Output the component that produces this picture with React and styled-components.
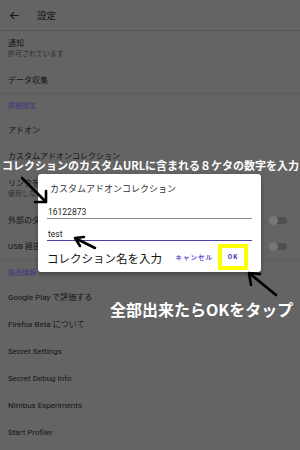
import React from 'react'
import styled, { createGlobalStyle } from 'styled-components';

const Global = createGlobalStyle`
  body {
    margin: 0;
    background: #646464;
    font-family: Roboto, "Noto Sans CJK JP", sans-serif;
  }
`

const Screen = styled.div`
  position: relative;
  width: 300px;
  height: 450px;
  overflow: hidden;
  background: #646464;
`

const AppBar = styled.div`
  height: 30px;
  display: flex;
  align-items: center;
  padding-left: 9px;
  box-shadow: 0 1px 1px rgba(0, 0, 0, 0.12);
  svg {
    width: 11px;
    height: 11px;
  }
`

const BarTitle = styled.div`
  margin-left: 17px;
  font-size: 9.5px;
  color: #161616;
`

const Row = styled.div`
  height: ${p => p.h}px;
  display: flex;
  align-items: center;
  padding: 0 13px 0 8px;
  box-sizing: border-box;
`

const Texts = styled.div`
  display: flex;
  flex-direction: column;
  flex: 1;
  white-space: nowrap;
`

const Label = styled.div`
  font-size: 8px;
  line-height: 11px;
  color: #141414;
`

const Sub = styled.div`
  font-size: 7px;
  line-height: 10px;
  color: #303030;
`

const Divider = styled.div`
  height: 1px;
  background: #5b5b5b;
`

const Category = styled.div`
  height: 23px;
  padding: 7px 0 0 8px;
  box-sizing: border-box;
  font-size: 7px;
  line-height: 10px;
  color: #41337f;
`

const Toggle = styled.div`
  position: relative;
  width: 17px;
  height: 7px;
  border-radius: 4px;
  background: #505050;
  &::after {
    content: '';
    position: absolute;
    left: -1px;
    top: -1px;
    width: 9px;
    height: 9px;
    border-radius: 50%;
    background: #777777;
  }
`

const Dialog = styled.div`
  position: absolute;
  left: 38px;
  top: 174px;
  width: 223px;
  height: 98px;
  box-sizing: border-box;
  padding: 9px 9px 0 9px;
  background: #ffffff;
  border-radius: 3px;
  box-shadow: 0 2px 4px rgba(0, 0, 0, 0.35);
`

const DialogTitle = styled.div`
  font-size: 9px;
  line-height: 12px;
  color: #333333;
  padding-left: 3px;
`

const Field = styled.div`
  margin-top: ${p => p.mt}px;
  font-size: 8.5px;
  line-height: 12px;
  color: #1f1f1f;
  padding-left: 1px;
  border-bottom: ${p => p.active ? '1.5px solid #4c3fa6' : '1px solid #8a8a8a'};
`

const Actions = styled.div`
  display: flex;
  justify-content: flex-end;
  align-items: center;
  margin-top: 3px;
  padding-right: 4px;
`

const TextButton = styled.div`
  font-size: 6.5px;
  font-weight: bold;
  letter-spacing: 1px;
  color: ${p => p.strong ? '#4a33b5' : '#6a55d0'};
`

const Highlight = styled.div`
  width: 30px;
  height: 26px;
  box-sizing: border-box;
  border: 4px solid #ffff00;
  display: flex;
  align-items: center;
  justify-content: center;
  margin-left: 5px;
`

const Note = styled.div`
  position: absolute;
  left: ${p => p.x}px;
  top: ${p => p.y}px;
  font-family: "Noto Sans CJK JP", sans-serif;
  font-size: ${p => p.size}px;
  line-height: ${p => p.size + 4}px;
  font-weight: ${p => p.bold ? 'bold' : 'normal'};
  color: ${p => p.color};
  white-space: nowrap;
`

const Arrows = styled.svg`
  position: absolute;
  left: 0;
  top: 0;
  width: 300px;
  height: 450px;
  pointer-events: none;
`

const items = [
  { h: 26, label: 'データ収集' },
]

const advanced = [
  { h: 26, label: 'アドオン' },
  { h: 26, label: 'カスタムアドオンコレクション' },
  { h: 38, label: 'リンクをアプリで開く', sub: '使用しない' },
  { h: 26, label: '外部のダウンロードマネージャー', toggle: true },
  { h: 27, label: 'USB 経由のリモートデバッグ', toggle: true },
]

const about = [
  'Google Play で評価する',
  'Firefox Beta について',
  'Secret Settings',
  'Secret Debug Info',
  'Nimbus Experiments',
  'Start Profiler',
]

const Item = ({ h, label, sub, toggle }) => (
  <Row h={h}>
    <Texts>
      <Label>{label}</Label>
      {sub && <Sub>{sub}</Sub>}
    </Texts>
    {toggle && <Toggle />}
  </Row>
)

const App = () => {
  return (
    <Screen>
      <Global />
      <AppBar>
        <svg viewBox="0 0 24 24" fill="none" stroke="#161616" strokeWidth="2.4">
          <path d="M21 12H4M11 4.5 3.5 12l7.5 7.5" />
        </svg>
        <BarTitle>設定</BarTitle>
      </AppBar>
      <Item h={37} label="通知" sub="許可されています" />
      {items.map((it, i) => <Item key={i} {...it} />)}
      <Divider />
      <Category>詳細設定</Category>
      {advanced.map((it, i) => <Item key={i} {...it} />)}
      <Divider />
      <Category>製品情報</Category>
      {about.map((label, i) => <Item key={i} h={27} label={label} />)}

      <Dialog>
        <DialogTitle>カスタムアドオンコレクション</DialogTitle>
        <Field mt={11}>16122873</Field>
        <Field mt={9} active>test</Field>
        <Actions>
          <TextButton>キャンセル</TextButton>
          <Highlight>
            <TextButton strong>OK</TextButton>
          </Highlight>
        </Actions>
      </Dialog>

      <Note x={2} y={158} size={11} bold color="#ffffff">
        コレクションのカスタムURLに含まれる８ケタの数字を入力
      </Note>
      <Note x={47} y={251} size={11.5} color="#111111">コレクション名を入力</Note>
      <Note x={110} y={299} size={16} bold color="#ffffff">全部出来たらOKをタップ</Note>

      <Arrows viewBox="0 0 300 450" fill="none" stroke="#000" strokeWidth="2.6" strokeLinecap="round" strokeLinejoin="round">
        <path d="M22 178 L46 202 M46 191 L46 202 L35 202" />
        <path d="M95 248 L75 238 M84 237 L75 238 L80 246" />
        <path d="M276 295 L249 273 M260 274 L249 273 L251 285" />
      </Arrows>
    </Screen>
  )
}

export default App;
